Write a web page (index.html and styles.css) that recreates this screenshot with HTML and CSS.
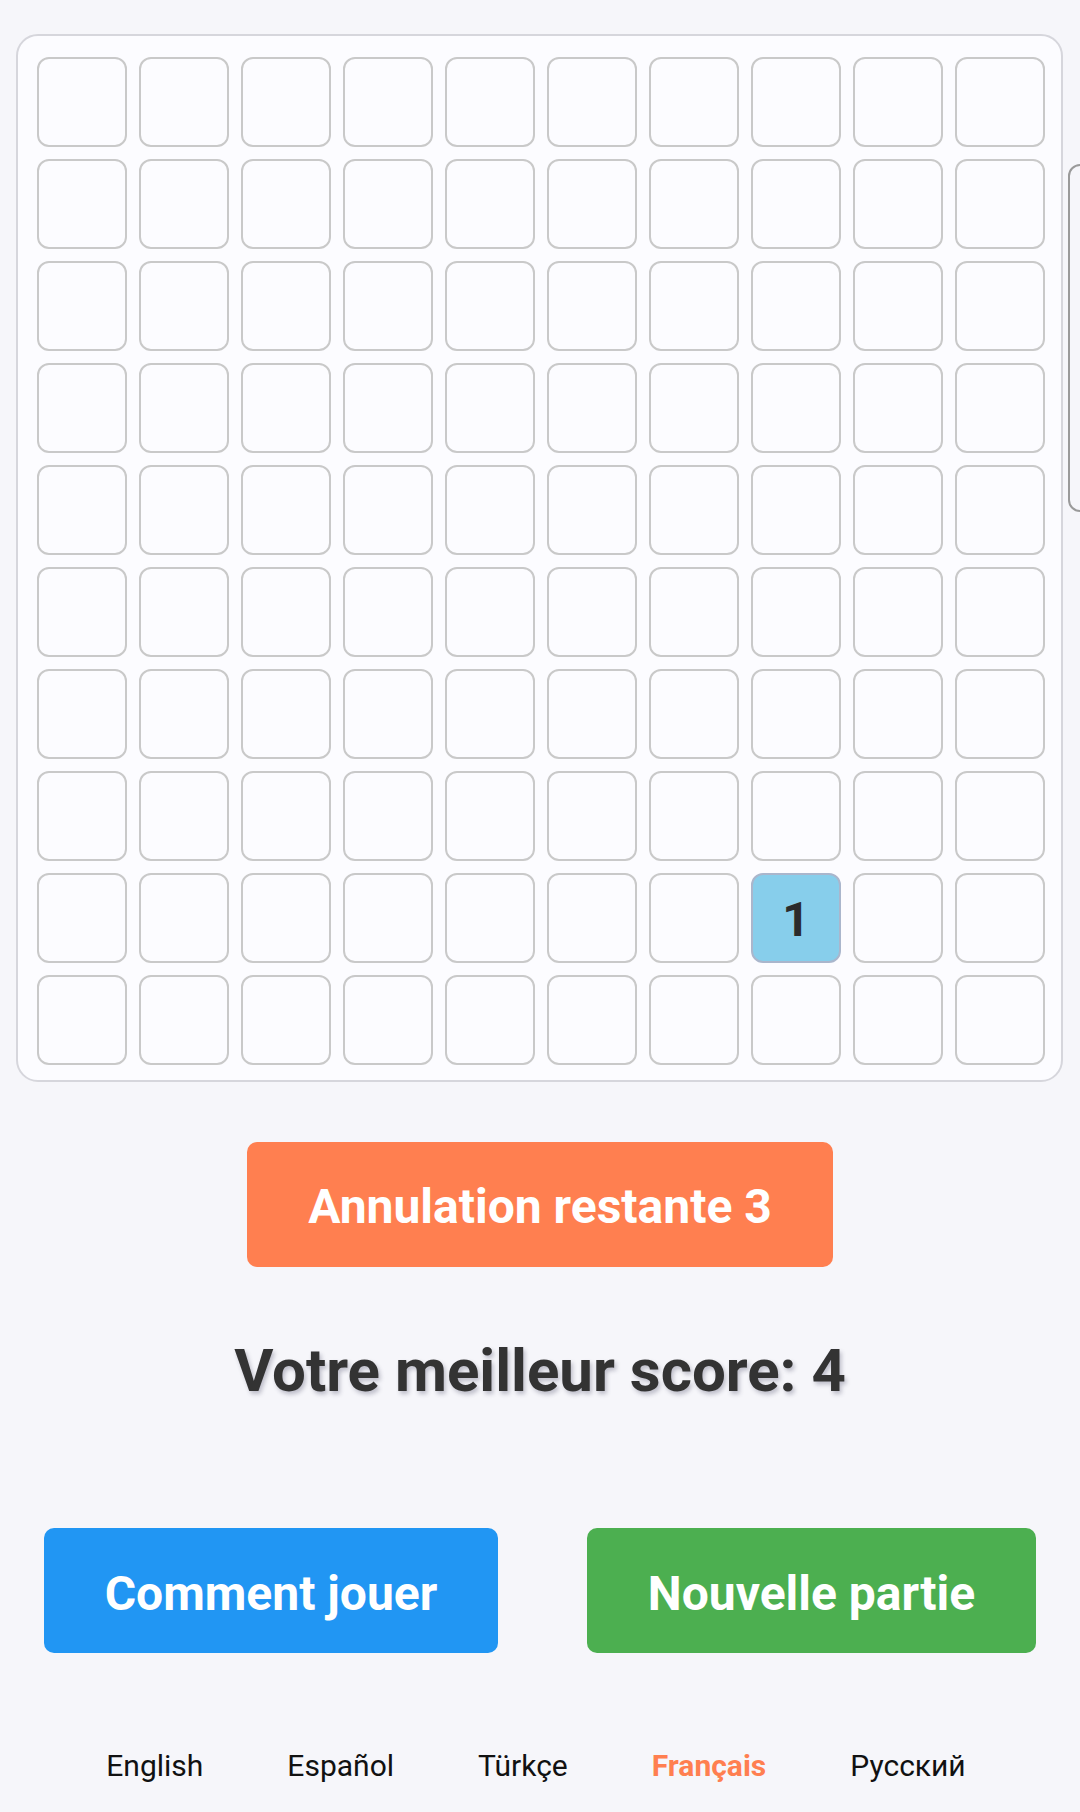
FILE: index.html
```html
<!DOCTYPE html>
<html lang="fr">
<head>
<meta charset="utf-8">
<title>Jeu</title>
<link rel="stylesheet" href="styles.css">
</head>
<body>
<main class="page">
  <div class="board">
    <div class="cell"></div><div class="cell"></div><div class="cell"></div><div class="cell"></div><div class="cell"></div><div class="cell"></div><div class="cell"></div><div class="cell"></div><div class="cell"></div><div class="cell"></div>
    <div class="cell"></div><div class="cell"></div><div class="cell"></div><div class="cell"></div><div class="cell"></div><div class="cell"></div><div class="cell"></div><div class="cell"></div><div class="cell"></div><div class="cell"></div>
    <div class="cell"></div><div class="cell"></div><div class="cell"></div><div class="cell"></div><div class="cell"></div><div class="cell"></div><div class="cell"></div><div class="cell"></div><div class="cell"></div><div class="cell"></div>
    <div class="cell"></div><div class="cell"></div><div class="cell"></div><div class="cell"></div><div class="cell"></div><div class="cell"></div><div class="cell"></div><div class="cell"></div><div class="cell"></div><div class="cell"></div>
    <div class="cell"></div><div class="cell"></div><div class="cell"></div><div class="cell"></div><div class="cell"></div><div class="cell"></div><div class="cell"></div><div class="cell"></div><div class="cell"></div><div class="cell"></div>
    <div class="cell"></div><div class="cell"></div><div class="cell"></div><div class="cell"></div><div class="cell"></div><div class="cell"></div><div class="cell"></div><div class="cell"></div><div class="cell"></div><div class="cell"></div>
    <div class="cell"></div><div class="cell"></div><div class="cell"></div><div class="cell"></div><div class="cell"></div><div class="cell"></div><div class="cell"></div><div class="cell"></div><div class="cell"></div><div class="cell"></div>
    <div class="cell"></div><div class="cell"></div><div class="cell"></div><div class="cell"></div><div class="cell"></div><div class="cell"></div><div class="cell"></div><div class="cell"></div><div class="cell"></div><div class="cell"></div>
    <div class="cell"></div><div class="cell"></div><div class="cell"></div><div class="cell"></div><div class="cell"></div><div class="cell"></div><div class="cell"></div><div class="cell cell-active">1</div><div class="cell"></div><div class="cell"></div>
    <div class="cell"></div><div class="cell"></div><div class="cell"></div><div class="cell"></div><div class="cell"></div><div class="cell"></div><div class="cell"></div><div class="cell"></div><div class="cell"></div><div class="cell"></div>
  </div>
  <div class="side-panel"></div>

  <button class="btn btn-undo">Annulation restante 3</button>

  <p class="best">Votre meilleur score: 4</p>

  <div class="actions">
    <button class="btn btn-help">Comment jouer</button>
    <button class="btn btn-new">Nouvelle partie</button>
  </div>

  <nav class="langs">
    <a class="lang">English</a>
    <a class="lang">Español</a>
    <a class="lang">Türkçe</a>
    <a class="lang lang-active">Français</a>
    <a class="lang">Русский</a>
  </nav>
</main>
</body>
</html>
```

FILE: styles.css
```css
html, body {
  margin: 0;
  padding: 0;
}

body {
  background: #f6f6fa;
  font-family: Roboto, "Liberation Sans", Arial, sans-serif;
  overflow: hidden;
}

.page {
  position: relative;
  display: flex;
  flex-direction: column;
  align-items: center;
  width: 1080px;
  height: 1812px;
}

.board {
  align-self: flex-start;
  box-sizing: border-box;
  margin: 34px 0 0 16px;
  width: 1047px;
  height: 1048px;
  border: 2px solid #d6d6dc;
  border-radius: 22px;
  background: #fcfcff;
  padding: 21px 17px 16px 19px;
  display: grid;
  grid-template-columns: repeat(10, 90px);
  grid-auto-rows: 90px;
  gap: 12px;
}

.cell {
  box-sizing: border-box;
  border: 2px solid #c9c9c9;
  border-radius: 12px;
  background: #fcfcff;
  display: flex;
  align-items: center;
  justify-content: center;
  padding-top: 3px;
  font-weight: 700;
  font-size: 48px;
  color: #2b2b2b;
}

.cell-active {
  background: #87ceeb;
  border-color: #aab6cc;
}

.side-panel {
  position: absolute;
  left: 1068px;
  top: 164px;
  width: 40px;
  height: 348px;
  box-sizing: border-box;
  border: 2px solid #9a9a9a;
  border-radius: 12px;
}

.btn {
  border: none;
  color: #ffffff;
  font-family: Roboto, "Liberation Sans", Arial, sans-serif;
  font-weight: 700;
  border-radius: 10px;
  padding: 0;
  display: flex;
  align-items: center;
  justify-content: center;
}

.btn-undo {
  margin-top: 60px;
  width: 586px;
  height: 125px;
  background: #ff7f50;
  font-size: 48px;
  padding-top: 4px;
}

.best {
  margin: 73px 0 0;
  font-size: 60px;
  line-height: 62px;
  font-weight: 700;
  color: #333333;
  text-shadow: 2px 3px 4px rgba(60, 60, 90, 0.3);
}

.actions {
  align-self: stretch;
  display: flex;
  gap: 89px;
  padding-left: 44px;
  margin-top: 126px;
}

.btn-help {
  width: 454px;
  height: 125px;
  background: #2196f3;
  font-size: 48px;
  padding-top: 5px;
}

.btn-new {
  width: 449px;
  height: 125px;
  background: #4caf50;
  font-size: 48px;
  padding-top: 5px;
}

.langs {
  display: flex;
  gap: 84px;
  margin-top: 96px;
  padding-right: 8px;
  font-size: 30px;
  line-height: 34px;
}

.lang {
  color: #111111;
}

.lang-active {
  color: #ff7f50;
  font-weight: 700;
}
```
